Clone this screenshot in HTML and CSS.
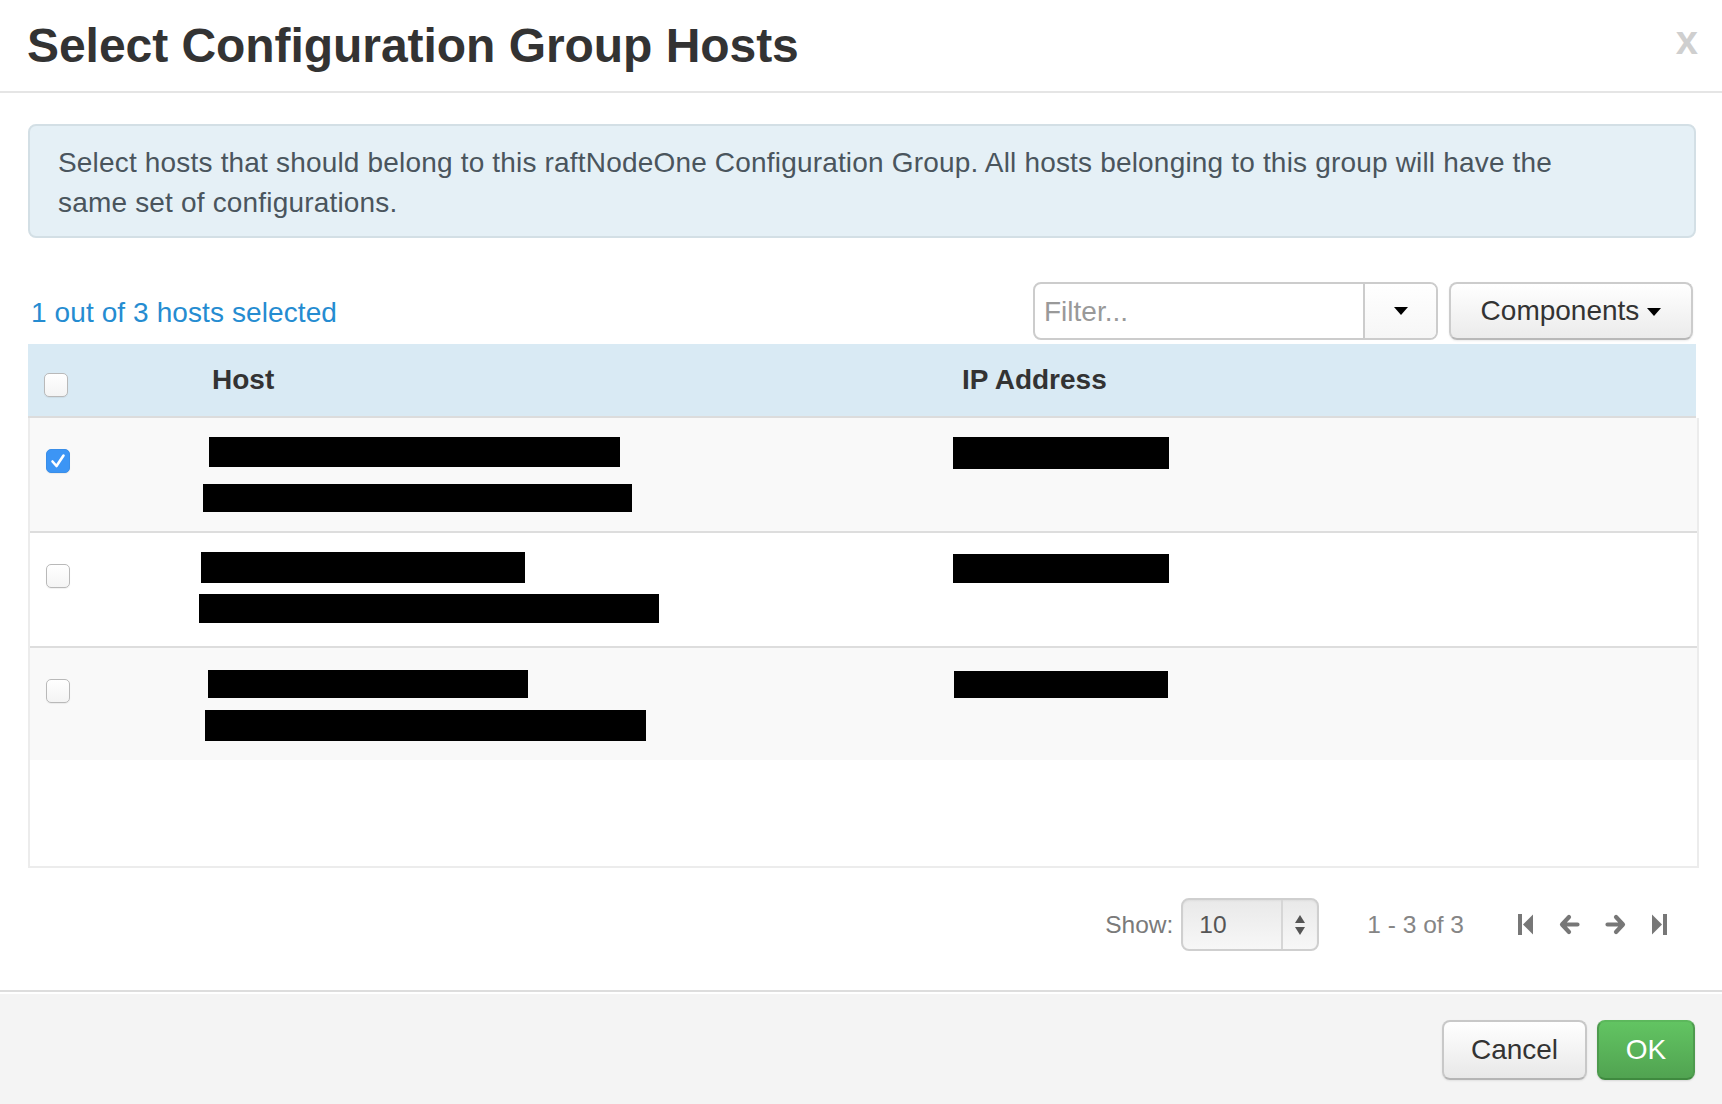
FILE: index.html
```html
<!DOCTYPE html>
<html>
<head>
<meta charset="utf-8">
<title>Select Configuration Group Hosts</title>
<link rel="stylesheet" href="styles.css">
</head>
<body>
<div class="modal">
  <div class="modal-header">
    <h3 class="modal-title">Select Configuration Group Hosts</h3>
    <span class="close">x</span>
  </div>
  <div class="modal-body">
    <div class="alert">Select hosts that should belong to this raftNodeOne Configuration Group. All hosts belonging to this group will have the same set of configurations.</div>
    <div class="toolbar">
      <a class="selected-count">1 out of 3 hosts selected</a>
      <div class="toolbar-right">
        <div class="filter-group">
          <div class="filter-input">Filter...</div>
          <div class="filter-btn"><span class="caret"></span></div>
        </div>
        <div class="btn-components">Components <span class="caret"></span></div>
      </div>
    </div>
    <div class="table">
      <div class="thead">
        <div class="cell-check"><span class="checkbox"></span></div>
        <div class="th">Host</div>
        <div class="th">IP Address</div>
      </div>
      <div class="tbody">
        <div class="row odd">
          <div class="cell-check"><span class="checkbox checked"><svg width="24" height="24" viewBox="0 0 24 24"><path d="M6.5 12.5 L10.5 17 L17.5 6.5" fill="none" stroke="#fff" stroke-width="2.6" stroke-linecap="round" stroke-linejoin="round"/></svg></span></div>
          <div class="cell-host">
            <div class="redact" style="margin-left:9px;width:411px;height:30px"></div>
            <div class="redact" style="margin-left:3px;width:429px;height:28px;margin-top:17px"></div>
          </div>
          <div class="cell-ip"><div class="redact" style="margin-left:2px;width:216px;height:32px"></div></div>
        </div>
        <div class="row">
          <div class="cell-check"><span class="checkbox"></span></div>
          <div class="cell-host">
            <div class="redact" style="margin-left:1px;width:324px;height:31px"></div>
            <div class="redact" style="margin-left:-1px;width:460px;height:29px;margin-top:11px"></div>
          </div>
          <div class="cell-ip"><div class="redact" style="margin-left:2px;width:216px;height:29px;margin-top:2px"></div></div>
        </div>
        <div class="row odd last">
          <div class="cell-check"><span class="checkbox"></span></div>
          <div class="cell-host">
            <div class="redact" style="margin-left:8px;width:320px;height:28px;margin-top:3px"></div>
            <div class="redact" style="margin-left:5px;width:441px;height:31px;margin-top:12px"></div>
          </div>
          <div class="cell-ip"><div class="redact" style="margin-left:3px;width:214px;height:27px;margin-top:4px"></div></div>
        </div>
      </div>
    </div>
    <div class="pagination">
      <span class="show-label">Show:</span>
      <div class="select">
        <span class="select-value">10</span>
        <span class="select-arrows"><svg width="12" height="22" viewBox="0 0 12 22"><path d="M6 1 L11 9 H1 Z M6 21 L11 13 H1 Z" fill="#555"/></svg></span>
      </div>
      <span class="page-info">1 - 3 of 3</span>
      <div class="page-nav">
        <svg class="nav-icon" width="16" height="21" viewBox="0 0 16 21"><rect x="0" y="0" width="4" height="21" fill="#777"/><path d="M15 0.5 L5 10.5 L15 20.5 Z" fill="#777"/></svg>
        <svg class="nav-icon" width="21" height="21" viewBox="0 0 21 21"><path d="M10 3 L3 10.5 L10 18 M3.5 10.5 H18.5" fill="none" stroke="#777" stroke-width="4.2" stroke-linecap="round" stroke-linejoin="round"/></svg>
        <svg class="nav-icon" width="21" height="21" viewBox="0 0 21 21"><path d="M11 3 L18 10.5 L11 18 M17.5 10.5 H2.5" fill="none" stroke="#777" stroke-width="4.2" stroke-linecap="round" stroke-linejoin="round"/></svg>
        <svg class="nav-icon" width="16" height="21" viewBox="0 0 16 21"><path d="M1 0.5 L11 10.5 L1 20.5 Z" fill="#777"/><rect x="12" y="0" width="4" height="21" fill="#777"/></svg>
      </div>
    </div>
  </div>
  <div class="modal-footer">
    <button class="btn btn-cancel">Cancel</button>
    <button class="btn btn-ok">OK</button>
  </div>
</div>
</body>
</html>
```

FILE: styles.css
```css
* { box-sizing: border-box; }
html, body { margin: 0; padding: 0; background: #fff; }
body { font-family: "Liberation Sans", Arial, Helvetica, sans-serif; color: #333; font-size: 28px; line-height: 40px; }

.modal { width: 1722px; height: 1104px; display: flex; flex-direction: column; background: #fff; }

.modal-header {
  height: 93px;
  padding: 16px 24px 0 27px;
  border-bottom: 2px solid #e5e5e5;
  display: flex;
  justify-content: space-between;
  align-items: flex-start;
}
.modal-title { margin: 0; font-size: 48px; line-height: 60px; font-weight: bold; color: #333; letter-spacing: -0.05px; }
.close { font-size: 40px; line-height: 60px; font-weight: bold; color: #cfcfcf; margin-top: -6px; }

.modal-body { flex: 1; padding: 31px 26px 0 28px; }

.alert {
  height: 114px;
  padding: 17px 110px 0 28px;
  background: #e5f0f6;
  border: 2px solid #d3dfe5;
  border-radius: 8px;
  color: #4a555d;
  font-size: 28px;
  line-height: 40px;
  letter-spacing: 0.18px;
}

.toolbar { margin-top: 44px; height: 58px; display: flex; justify-content: space-between; align-items: center; padding-right: 3px; }
.selected-count { color: #258cd1; padding-left: 3px; padding-top: 3px; line-height: 55px; letter-spacing: 0.1px; }
.toolbar-right { display: flex; align-items: center; gap: 11px; }

.filter-group { display: flex; width: 405px; height: 58px; border: 2px solid #cccccc; border-radius: 8px; background: #fff; }
.filter-input { flex: 1; color: #999; padding-left: 9px; line-height: 56px; }
.filter-btn { width: 73px; border-left: 2px solid #ccc; display: flex; align-items: center; justify-content: center; background: linear-gradient(#fff, #f6f6f6); border-radius: 0 6px 6px 0; }
.caret { display: inline-block; width: 0; height: 0; border-left: 7px solid transparent; border-right: 7px solid transparent; border-top: 8px solid #000; vertical-align: middle; }

.btn-components {
  width: 244px; height: 58px;
  border: 2px solid #ccc; border-bottom-color: #b8b8b8;
  border-radius: 8px;
  background: linear-gradient(#ffffff, #ebebeb);
  color: #333;
  display: flex; align-items: center; justify-content: center; gap: 8px;
  box-shadow: 0 1px 2px rgba(0,0,0,0.08);
}
.btn-components .caret { margin-top: 2px; }

.table { margin-top: 4px; width: 1668px; }
.thead {
  height: 74px;
  background: #d9eaf4;
  border-bottom: 2px solid #dcdcdc;
  display: grid;
  grid-template-columns: 184px 750px 1fr;
  align-items: center;
}
.thead .cell-check { padding-left: 16px; display: flex; align-items: center; padding-top: 10px; }
.th { font-weight: bold; color: #333; line-height: 72px; }

.tbody { border: 2px solid #ececec; border-top: none; min-height: 450px; width: 1671px; }
.row { display: grid; grid-template-columns: 170px 751px 1fr; height: 115px; border-bottom: 2px solid #dddddd; background: #fff; }
.row.odd { background: #f9f9f9; }
.row.last { height: 112px; border-bottom: none; }
.row .cell-check { padding: 31px 0 0 16px; }
.cell-host { padding-top: 19px; }
.cell-ip { padding-top: 19px; }
.redact { background: #000; }

.checkbox {
  display: block; width: 24px; height: 24px;
  border: 1.5px solid #b9b9b9; border-radius: 5px;
  background: linear-gradient(#fff, #f4f4f4);
  box-shadow: 0 1px 1px rgba(0,0,0,0.06);
}
.checkbox.checked { background: #3c95f5; border-color: #3a8ee8; }
.checkbox.checked svg { display: block; margin: -1.5px 0 0 -1.5px; }

.pagination { margin-top: 30px; height: 53px; display: flex; justify-content: flex-end; align-items: center; padding-right: 29px; color: #777; font-size: 24.5px; }
.show-label { color: #7a7a7a; margin-right: 8px; }
.select {
  width: 138px; height: 53px;
  border: 2px solid #cfcfcf; border-radius: 8px;
  background: linear-gradient(#e9e9e9, #f7f7f7);
  display: flex; align-items: stretch;
  box-shadow: inset 0 1px 2px rgba(0,0,0,0.05);
}
.select-value { flex: 1; color: #555; padding-left: 16px; line-height: 49px; }
.select-arrows { width: 36px; border-left: 2px solid #d6d6d6; display: flex; align-items: center; justify-content: center; }
.page-info { color: #858585; margin-left: 48px; margin-right: 54px; }
.page-nav { display: flex; align-items: center; gap: 25px; }
.nav-icon { display: block; }

.modal-footer {
  height: 114px;
  background: #f4f4f4;
  border-top: 2px solid #dddddd;
  box-shadow: inset 0 2px 0 #ffffff;
  display: flex; justify-content: flex-end; align-items: flex-start;
  padding: 28px 27px 0 0;
  gap: 10px;
}
.btn {
  height: 60px; font-family: "Liberation Sans", Arial, Helvetica, sans-serif; font-size: 28px;
  border-radius: 8px; padding: 0; cursor: pointer;
}
.btn-cancel {
  width: 145px; color: #333;
  background: linear-gradient(#ffffff, #e8e8e8);
  border: 2px solid #c8c8c8; border-bottom-color: #b5b5b5;
  box-shadow: 0 1px 2px rgba(0,0,0,0.08);
}
.btn-ok {
  width: 98px; color: #fff;
  background: linear-gradient(#62c462, #51a351);
  border: 2px solid #4d9a4d; border-color: #5cb85c #4e9b4e #3f8a3f;
  box-shadow: 0 1px 2px rgba(0,0,0,0.12);
}
```
